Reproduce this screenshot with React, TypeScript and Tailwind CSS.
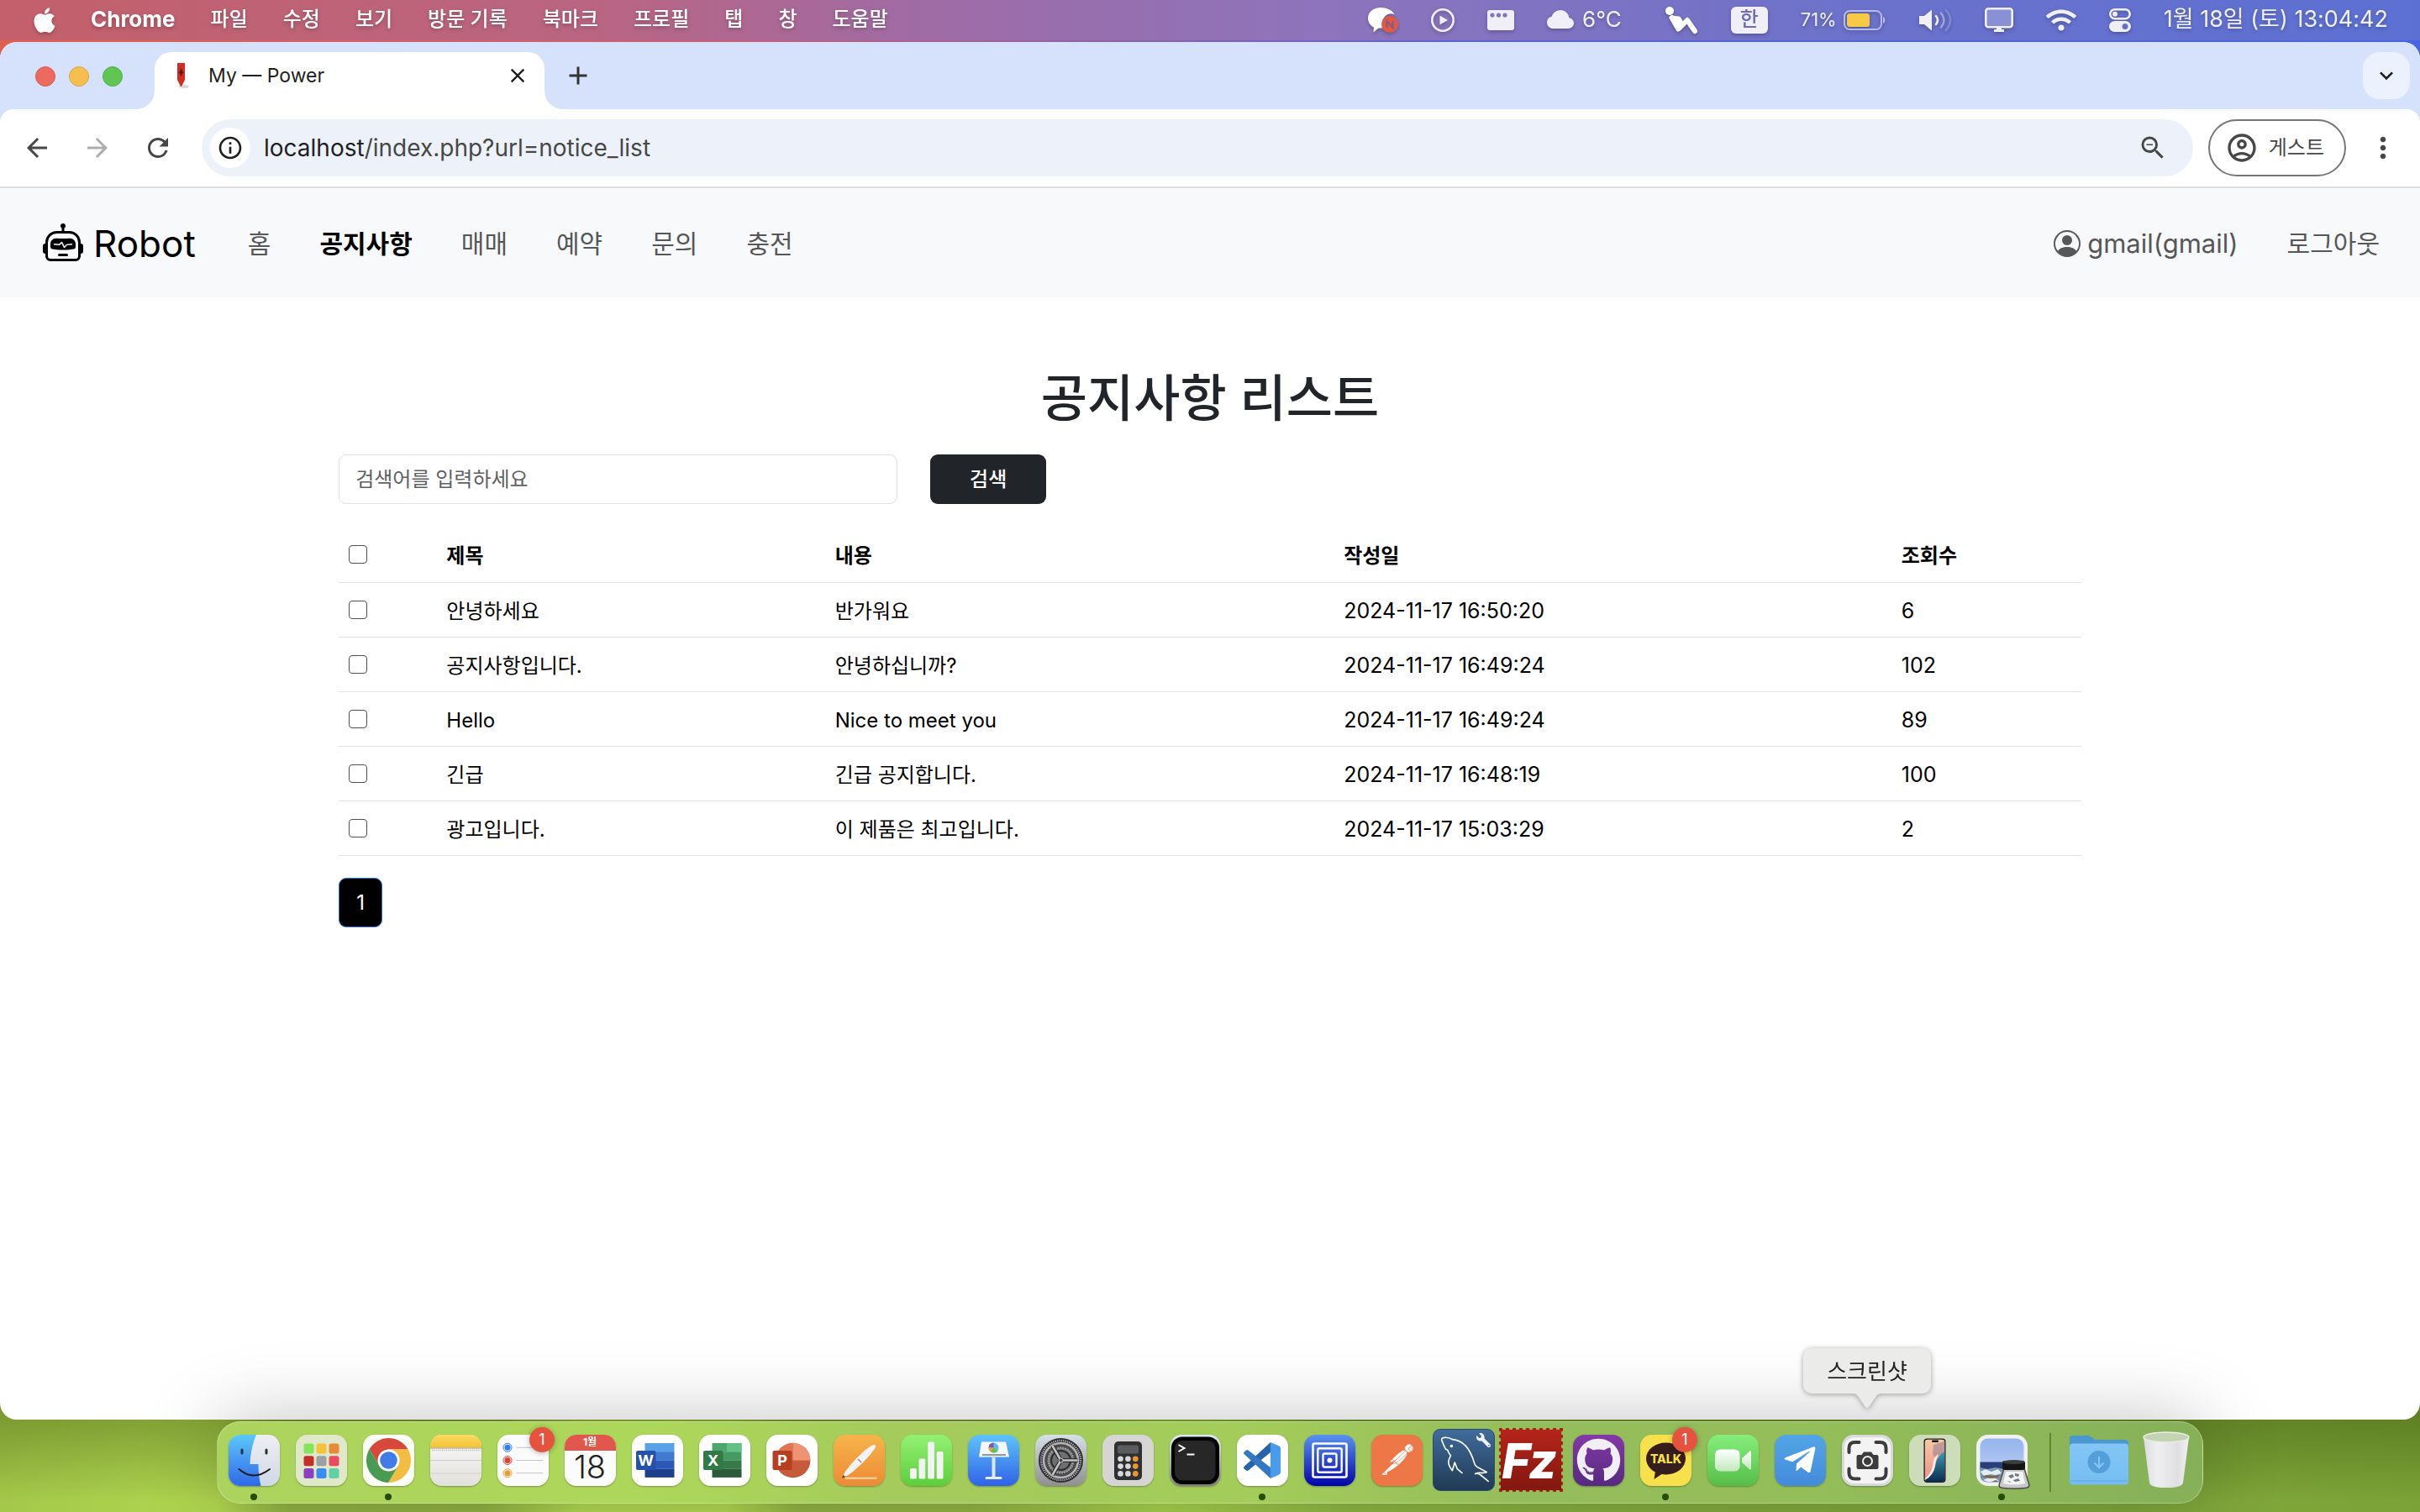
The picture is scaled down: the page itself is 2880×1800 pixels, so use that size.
import type { ReactNode } from "react";
import { FaApple, FaGithub, FaWifi, FaTelegramPlane, FaWrench } from "react-icons/fa";
import { BsRobot, BsPersonCircle, BsCloudFill } from "react-icons/bs";
import { SiPostman } from "react-icons/si";
import {
  MdArrowBack,
  MdArrowForward,
  MdRefresh,
  MdInfoOutline,
  MdZoomOut,
  MdOutlineAccountCircle,
  MdMoreVert,
  MdClose,
  MdAdd,
  MdKeyboardArrowDown,
} from "react-icons/md";

/* ---------- menu bar ---------- */

const menus = ["파일", "수정", "보기", "방문 기록", "북마크", "프로필", "탭", "창", "도움말"];

function MenuBar() {
  return (
    <header className="flex h-12 shrink-0 items-center justify-between bg-[linear-gradient(90deg,#c4606b_0%,#b96582_25%,#9f6ba5_38%,#8d74bc_55%,#6b72cb_77%,#5c70d3_100%)] pr-[38px] pl-9 text-2xl text-white">
      <nav className="flex items-center gap-[42px] pb-0.5 font-medium drop-shadow-[0_2px_2px_rgba(0,0,0,0.25)]" aria-label="메뉴 막대">
        <button type="button" aria-label="Apple" className="-mr-1 pt-0.5">
          <FaApple className="size-[34px]" />
        </button>
        <button type="button" className="text-[26px] font-bold">
          Chrome
        </button>
        {menus.map((m) => (
          <button type="button" key={m}>
            {m}
          </button>
        ))}
      </nav>
      <div className="flex items-center gap-[39px] text-[#f0eff8] drop-shadow-[0_2px_2px_rgba(0,0,0,0.25)]">
        <svg viewBox="0 0 36 32" className="h-8 w-9" aria-hidden="true">
          <path d="M15 1C7 1 0 6 0 13.500c0 5 3 9 7 11l-.5 6 6-5c2 0 4 0 6-.5a11 11 0 0 1 13-16C29 4 22 1 15 1z" fill="#fff" />
          <circle cx="26" cy="21" r="10" fill="#df5a40" />
          <path d="M22.500 25v-8l7 8v-8" stroke="#8a5a80" strokeWidth="2.200" fill="none" />
        </svg>
        <svg viewBox="0 0 28 28" className="size-7" aria-hidden="true">
          <circle cx="14" cy="14" r="12.700" fill="none" stroke="currentColor" strokeWidth="2.600" />
          <path d="M10.500 8.500l9.500 5.500-9.500 5.500z" fill="currentColor" />
        </svg>
        <svg viewBox="0 0 32 24" className="h-6 w-8" aria-hidden="true">
          <rect width="32" height="24" rx="3" fill="currentColor" />
          <circle cx="6" cy="6" r="2.600" fill="#7f74c0" />
          <circle cx="13.500" cy="6" r="2.600" fill="#7f74c0" />
          <circle cx="21" cy="6" r="2.600" fill="#7f74c0" />
        </svg>
        <span className="flex items-center gap-2.5 text-[26px]">
          <BsCloudFill className="size-8" />
          <span className="pb-0.5">6°C</span>
        </span>
        <svg viewBox="0 0 40 34" className="ml-3 h-[34px] w-10" aria-hidden="true">
          <circle cx="6" cy="6" r="5" fill="#fff" />
          <path d="M9 14L17 27L27 17L36 30" fill="none" stroke="#fff" strokeWidth="6" strokeLinecap="round" strokeLinejoin="round" />
          <path d="M8 14l9 1 4 7-5 6z" fill="#fff" stroke="#fff" strokeWidth="5" strokeLinejoin="round" />
        </svg>
        <span className="flex h-8 w-11 items-center justify-center rounded-md bg-[#f0eff8] pb-0.5 text-2xl font-medium text-[#6d6cb8]">한</span>
        <span className="flex items-center gap-2 text-[22px]">
          <span>71%</span>
          <svg viewBox="0 0 50 24" className="h-6 w-[50px]" aria-hidden="true">
            <rect x="1" y="1" width="44" height="22" rx="6.500" fill="none" stroke="#b9b9ea" strokeWidth="2" />
            <rect x="4" y="4" width="27" height="16" rx="3.500" fill="#f7ca45" />
            <path d="M47 8v8c3-1 3-7 0-8z" fill="#b9b9ea" />
          </svg>
        </span>
        <svg viewBox="0 0 40 28" className="h-7 w-10" fill="none" strokeLinecap="round" strokeWidth="2.500" aria-hidden="true">
          <path d="M1 9h6l9-7.500v25L7 19H1z" fill="currentColor" />
          <path d="M21 9q4 5 0 10" stroke="#f0eff8" />
          <path d="M27 5.500q7 8.500 0 17" stroke="#9da3e0" />
          <path d="M33 2q10 12 0 24" stroke="#8088d6" />
        </svg>
        <svg viewBox="0 0 34 29" className="h-[29px] w-[34px]" aria-hidden="true">
          <rect x="1.300" y="1.300" width="31.400" height="22" rx="3" fill="#8a90d6" stroke="currentColor" strokeWidth="2.600" />
          <path d="M14 23h6v3h3v3H11v-3h3z" fill="currentColor" />
        </svg>
        <FaWifi className="size-9" />
        <svg viewBox="0 0 26 28" className="h-7 w-[26px]" aria-hidden="true">
          <rect x="1.300" y="1.300" width="23.400" height="11" rx="5.500" fill="none" stroke="currentColor" strokeWidth="2.600" />
          <circle cx="7" cy="6.800" r="3" fill="currentColor" />
          <rect y="15" width="26" height="13" rx="6.500" fill="currentColor" />
          <circle cx="19" cy="21.500" r="3.500" fill="#666fce" />
        </svg>
        <time className="pb-0.5 text-[27px] whitespace-nowrap">1월 18일 (토) 13:04:42</time>
      </div>
    </header>
  );
}

/* ---------- browser chrome ---------- */

function TabStrip() {
  return (
    <div className="flex h-20 items-end bg-[#d6e1fb] pl-[42px]">
      <div className="flex items-center gap-4 self-center pt-0.5">
        <button type="button" aria-label="닫기" className="size-6 rounded-full border border-[#d65a4f] bg-[#ec6a5e]" />
        <button type="button" aria-label="최소화" className="size-6 rounded-full border border-[#d9a441] bg-[#f4bf4f]" />
        <button type="button" aria-label="확대" className="size-6 rounded-full border border-[#52ad46] bg-[#61c554]" />
      </div>
      <svg viewBox="0 0 22 22" className="ml-4 size-[22px]" aria-hidden="true">
        <path d="M22 0v22H0A22 22 0 0 0 22 0z" fill="#fff" />
      </svg>
      <div className="flex h-[68px] w-[464px] items-center rounded-t-[20px] bg-white pb-3 pl-[26px]">
        <svg viewBox="0 0 16 32" className="h-8 w-4" aria-hidden="true">
          <ellipse cx="9" cy="29" rx="6" ry="2" fill="#d8d8d8" />
          <path d="M1 1h9v20l-4 8h-1l-4-8z" fill="#cf2e20" />
          <path d="M5.500 7l1.500 4 2 1-2 1.500-1.500 4-1.500-4-2-1.500 2-1z" fill="#6a1510" />
        </svg>
        <span className="ml-[22px] grow text-[23px] text-[#1f1f1f]">My — Power</span>
        <button type="button" aria-label="탭 닫기" className="mr-[18px] text-[#1f1f1f]">
          <MdClose className="size-7" />
        </button>
      </div>
      <svg viewBox="0 0 22 22" className="size-[22px]" aria-hidden="true">
        <path d="M0 0v22h22A22 22 0 0 1 0 0z" fill="#fff" />
      </svg>
      <button type="button" aria-label="새 탭" className="self-center text-[#333]">
        <MdAdd className="size-9" />
      </button>
      <button
        type="button"
        aria-label="탭 검색"
        className="mr-3 ml-auto flex size-14 items-center justify-center self-center rounded-[20px] bg-[#ebf2fd] text-[#1f1f1f]"
      >
        <MdKeyboardArrowDown className="size-8" />
      </button>
    </div>
  );
}

function Toolbar() {
  return (
    <div className="bg-[#d6e1fb]">
      <div className="flex h-[94px] items-center rounded-t-2xl border-b-2 border-[#dfdfdf] bg-white pr-6 pl-[26px] text-[#474747]">
        <button type="button" aria-label="뒤로">
          <MdArrowBack className="size-9" />
        </button>
        <button type="button" aria-label="앞으로" className="ml-9 text-[#adadad]">
          <MdArrowForward className="size-9" />
        </button>
        <button type="button" aria-label="새로고침" className="ml-9">
          <MdRefresh className="size-9" />
        </button>
        <div className="ml-[34px] flex h-[68px] grow items-center rounded-full bg-[#edf2fa] pr-[30px] pl-2.5">
          <button type="button" aria-label="사이트 정보" className="flex size-12 items-center justify-center rounded-full bg-white text-[#1f1f1f]">
            <MdInfoOutline className="size-8" />
          </button>
          <a href="#url" className="ml-4 grow text-[28px] text-[#1f1f1f]">
            localhost<span className="text-[#474747]">/index.php?url=notice_list</span>
          </a>
          <button type="button" aria-label="축소">
            <MdZoomOut className="size-9" />
          </button>
        </div>
        <button type="button" className="ml-[18px] flex h-[68px] items-center gap-3 rounded-full border-2 border-[#747775] pr-6 pl-[18px] text-2xl">
          <MdOutlineAccountCircle className="size-10" />
          게스트
        </button>
        <button type="button" aria-label="더보기" className="ml-6">
          <MdMoreVert className="size-10" />
        </button>
      </div>
    </div>
  );
}

/* ---------- web page ---------- */

const links = ["홈", "공지사항", "매매", "예약", "문의", "충전"];

function SiteNav() {
  return (
    <nav className="flex h-[130px] items-center justify-between bg-[#f8f9fb] px-12 pt-0.5 text-[30px] text-[#565758]" aria-label="사이트">
      <div className="flex items-center gap-[58px]">
        <a href="#home" className="mr-1 flex items-center gap-3 pl-[3px] text-[44px] text-black">
          <BsRobot className="size-12" />
          Robot
        </a>
        {links.map((l) => (
          <a key={l} href={"#" + l} className={l === "공지사항" ? "font-bold text-black" : ""}>
            {l}
          </a>
        ))}
      </div>
      <div className="flex items-center gap-[58px]">
        <a href="#profile" className="flex items-center gap-2">
          <BsPersonCircle className="size-8" />
          <span className="text-[31px]">gmail(gmail)</span>
        </a>
        <a href="#logout">로그아웃</a>
      </div>
    </nav>
  );
}

const rows = [
  ["안녕하세요", "반가워요", "2024-11-17 16:50:20", "6"],
  ["공지사항입니다.", "안녕하십니까?", "2024-11-17 16:49:24", "102"],
  ["Hello", "Nice to meet you", "2024-11-17 16:49:24", "89"],
  ["긴급", "긴급 공지합니다.", "2024-11-17 16:48:19", "100"],
  ["광고입니다.", "이 제품은 최고입니다.", "2024-11-17 15:03:29", "2"],
];

function Check({ label }: { label: string }) {
  return (
    <input
      type="checkbox"
      aria-label={label}
      className="block size-[22px] appearance-none rounded-[4px] border border-[#4f4f4f] bg-white"
    />
  );
}

function NoticeList() {
  return (
    <main className="mx-auto w-[72%] grow pt-20 text-2xl text-black">
      <h1 className="text-center text-[60px]/[80px] font-medium text-[#212529]">공지사항 리스트</h1>
      <form className="mt-[27px] flex gap-[39px]" onSubmit={(e) => e.preventDefault()}>
        <input
          type="text"
          aria-label="검색어"
          placeholder="검색어를 입력하세요"
          className="h-[59px] w-[665px] rounded-[9px] border border-[#dee2e6] px-[19px] placeholder:text-[#5e6164]"
        />
        <button type="submit" className="h-[59px] w-[138px] rounded-[9px] bg-[#212529] font-medium text-white">
          검색
        </button>
      </form>
      <table className="mt-7 w-full table-fixed text-left">
        <colgroup>
          <col className="w-[5.6%]" />
          <col className="w-[22.3%]" />
          <col className="w-[29.2%]" />
          <col className="w-[32%]" />
          <col />
        </colgroup>
        <thead>
          <tr className="h-[65px] border-b border-[#dee2e6]">
            <th className="px-3">
              <Check label="전체 선택" />
            </th>
            {["제목", "내용", "작성일", "조회수"].map((h) => (
              <th key={h} className="px-3 pt-1 font-bold">
                {h}
              </th>
            ))}
          </tr>
        </thead>
        <tbody>
          {rows.map((r) => (
            <tr key={r[0]} className="h-[65px] border-b border-[#dee2e6]">
              <td className="px-3">
                <Check label={r[0]} />
              </td>
              {r.map((c, i) => (
                <td key={i} className={i > 1 ? "px-3 pt-1 text-[25px]" : "px-3 pt-1"}>
                  {c}
                </td>
              ))}
            </tr>
          ))}
        </tbody>
      </table>
      <nav className="mt-[26px]" aria-label="페이지">
        <a href="#1" className="flex h-[59px] w-[52px] items-center justify-center rounded-[9px] border border-[#2f6fe8] bg-black pt-0.5 text-white">
          1
        </a>
      </nav>
    </main>
  );
}

/* ---------- dock ---------- */

function Icon({ children }: { children: ReactNode }) {
  return (
    <svg viewBox="0 0 61 61" className="size-[61px] rounded-[14px] shadow-[0_1px_2px_rgba(0,0,0,0.3)]" aria-hidden="true">
      {children}
    </svg>
  );
}

function Grad({ id, from, to }: { id: string; from: string; to: string }) {
  return (
    <linearGradient id={id} x1="0" y1="0" x2="0" y2="1">
      <stop stopColor={from} />
      <stop offset="1" stopColor={to} />
    </linearGradient>
  );
}

const Finder = () => (
  <Icon>
    <Grad id="fa" from="#5cc8f8" to="#2f68ea" />
    <Grad id="fb" from="#efeff2" to="#cfd8e8" />
    <rect width="61" height="61" fill="url(#fb)" />
    <path d="M0 0h33c-5 12-7 24-7.500 35h10c0 9 1 18 3 26H0z" fill="url(#fa)" />
    <path d="M16 18v4M45 18v4" stroke="#263238" strokeWidth="3" strokeLinecap="round" />
    <path d="M12.500 41q17 15 36.500 0" fill="none" stroke="#1c1c1e" strokeWidth="2" strokeLinecap="round" />
  </Icon>
);

const pads = ["#84e45c", "#f5c23e", "#e78b36", "#c62f27", "#9aa0a6", "#ea4b61", "#8a40c0", "#3a8df0", "#63cfa4"];
const Launchpad = () => (
  <Icon>
    <rect width="61" height="61" fill="#dfe9ca" />
    {pads.map((c, i) => (
      <rect key={c} x={9.5 + (i % 3) * 15} y={10.5 + Math.floor(i / 3) * 14.8} width="12" height="12" rx="2.500" fill={c} />
    ))}
  </Icon>
);

const Chrome = () => (
  <Icon>
    <rect width="61" height="61" fill="#fbfdf7" />
    <path d="M30.500 17.500H53.600A26.500 26.500 0 0 0 7.700 17L19.200 37z" fill="#d8483a" />
    <path d="M30.500 17.500H53.600A26.500 26.500 0 0 1 30.200 57L41.800 37z" fill="#f2bd42" />
    <path d="M41.800 37L30.200 57A26.500 26.500 0 0 1 7.700 17L19.200 37z" fill="#4a9b52" />
    <circle cx="30.500" cy="30.500" r="13" fill="#fff" />
    <circle cx="30.500" cy="30.500" r="10.300" fill="#3f7ce8" />
  </Icon>
);

const Notes = () => (
  <Icon>
    <Grad id="na" from="#fadb62" to="#f3c233" />
    <Grad id="nb" from="#fafafa" to="#e2e0db" />
    <rect width="61" height="61" fill="url(#nb)" />
    <rect width="61" height="15.500" fill="url(#na)" />
    <path d="M0 16h61" stroke="#a09a86" />
    <path d="M2 18.500h58" stroke="#b8b8b8" strokeWidth="1.500" strokeDasharray="1.200 1.200" />
    <path d="M0 30.500h61M0 46h61" stroke="#cfcecb" />
  </Icon>
);

const Reminders = () => (
  <Icon>
    <rect width="61" height="61" fill="#fbfbfb" />
    {["#2f7cf6", "#e0402f", "#ee9a30"].map((c, i) => (
      <g key={c}>
        <circle cx="12" cy={15.3 + i * 15.2} r="5" fill="none" stroke={c} strokeWidth="1" />
        <circle cx="12" cy={15.3 + i * 15.2} r="3.500" fill={c} />
        <path d={`M22.500 ${15.3 + i * 15.2}h31.500`} stroke="#c4c4c6" />
      </g>
    ))}
  </Icon>
);

const Calendar = () => (
  <div className="flex size-[61px] flex-col items-center overflow-hidden rounded-[14px] bg-[#fbfbfb] shadow-[0_1px_2px_rgba(0,0,0,0.3)]">
    <div className="flex h-[19px] w-full items-center justify-center bg-[#e2574c] text-xs font-bold text-white">1월</div>
    <div className="text-[38px]/[38px] font-light text-[#222]">18</div>
  </div>
);

function Office({ letter, tile, bands }: { letter: string; tile: string; bands: string[] }) {
  return (
    <Icon>
      <rect width="61" height="61" fill="#fff" />
      {bands.map((c, i) => (
        <rect key={c} x="15.500" y={10 + i * 10.2} width="35" height="10.300" fill={c} />
      ))}
      {letter === "X" && <path d="M33 10h17.500v10.200H33z" fill="#63c186" />}
      <rect x="5" y="19" width="23.500" height="23" rx="2" fill={tile} />
      <text x="16.700" y="37" textAnchor="middle" fontSize="18" fontWeight="700" fill="#fff">
        {letter}
      </text>
    </Icon>
  );
}

const PowerPoint = () => (
  <Icon>
    <rect width="61" height="61" fill="#fff" />
    <circle cx="31.700" cy="30.500" r="20.700" fill="#c65a3b" />
    <path d="M31.700 9.800A20.700 20.700 0 0 0 11 30.500h20.700z" fill="#df7553" />
    <path d="M31.700 9.800A20.700 20.700 0 0 1 52.400 30.500H31.700z" fill="#f09274" />
    <rect x="7.500" y="19" width="23" height="23" rx="2" fill="#b83e20" />
    <text x="19" y="37" textAnchor="middle" fontSize="18" fontWeight="700" fill="#fff">
      P
    </text>
  </Icon>
);

const Pages = () => (
  <Icon>
    <Grad id="pa" from="#f5b54a" to="#ee8a36" />
    <rect width="61" height="61" fill="url(#pa)" />
    <path d="M14 51.700h37.500" stroke="#fbd9a8" strokeWidth="2" />
    <path d="M11.500 49.500q.5-3 3-6.500C22 33 36 18 46 12.500c3-1.500 5 0 3.500 3C44 25 29 40 17.500 48q-2 1.500-6 1.500z" fill="#f3f3f3" />
    <path d="M29 29l4 4" stroke="#8a8a8a" strokeWidth="1.500" />
    <path d="M10 52l1.500-4 2.500 2z" fill="#444" />
  </Icon>
);

const Numbers = () => (
  <Icon>
    <Grad id="nu" from="#93f073" to="#5dce3c" />
    <rect width="61" height="61" fill="url(#nu)" />
    {[
      [11, 40],
      [21.5, 28.5],
      [32.2, 8.5],
      [42.7, 20],
    ].map(([x, y]) => (
      <rect key={x} x={x} y={y} width="7.800" height={52.5 - y} rx="1.500" fill="#f1f4f1" />
    ))}
  </Icon>
);

const Keynote = () => (
  <Icon>
    <Grad id="ka" from="#5fc3fa" to="#2f62e8" />
    <rect width="61" height="61" fill="url(#ka)" />
    <path d="M16 8.500h29l4 18H13z" fill="#f3f6fa" />
    <path d="M17 24h28" stroke="#8d99a8" strokeWidth="2" />
    <circle cx="30.500" cy="15.500" r="6" fill="#5bc0e8" />
    <path d="M30.500 15.500v-6a6 6 0 0 0-6 6z" fill="#8b4fb0" />
    <path d="M30.500 15.500h-6a6 6 0 0 0 3 5z" fill="#f0a030" />
    <path d="M30.500 15.500l-3 5a6 6 0 0 0 8-1z" fill="#6cc04a" />
    <path d="M30.500 27v24" stroke="#dfe6ee" strokeWidth="4" />
    <path d="M22 51.500h17" stroke="#e8edf3" strokeWidth="3" strokeLinecap="round" />
  </Icon>
);

const Settings = () => (
  <Icon>
    <Grad id="sa" from="#d5e0e8" to="#8f8f8f" />
    <rect width="61" height="61" fill="url(#sa)" />
    <circle cx="30.500" cy="30.500" r="26.500" fill="#2c2c2e" />
    <circle cx="30.500" cy="30.500" r="23.500" fill="none" stroke="#b5b5b7" strokeWidth="2.500" strokeDasharray="1.200 1.200" />
    <circle cx="30.500" cy="30.500" r="20.500" fill="#4a4a4c" stroke="#b5b5b7" strokeWidth="2.500" />
    <circle cx="30.500" cy="30.500" r="15" fill="#77787a" stroke="#a0a0a2" strokeWidth="2" strokeDasharray="2 1" />
    <circle cx="30.500" cy="30.500" r="11.500" fill="#6e6f71" stroke="#2c2c2e" strokeWidth="2" />
    <path d="M30.500 30.500h20M30.500 30.500l-10-17.300M30.500 30.500l-10 17.300" stroke="#2c2c2e" strokeWidth="5" />
    <path d="M30.500 30.500h20M30.500 30.500l-10-17.300M30.500 30.500l-10 17.300" stroke="#c4c4c6" strokeWidth="2.600" />
    <circle cx="30.500" cy="30.500" r="2.500" fill="#444" stroke="#d0d0d2" />
  </Icon>
);

const Calculator = () => (
  <Icon>
    <rect width="61" height="61" fill="#d6d5d3" />
    <rect x="14" y="8" width="33" height="46" rx="5" fill="#2f3032" />
    <rect x="18" y="12.500" width="25" height="10" rx="2" fill="#5b5c5f" />
    {[0, 1, 2].map((r) =>
      [0, 1, 2].map((c) => (
        <circle key={`${r}${c}`} cx={21.5 + c * 8.9} cy={28.8 + r * 8.8} r="3.300" fill={c === 2 ? "#ef9530" : "#d9d9d9"} />
      )),
    )}
  </Icon>
);

const Terminal = () => (
  <Icon>
    <Grad id="ta" from="#dceaf2" to="#7d7d7d" />
    <rect width="61" height="61" fill="url(#ta)" />
    <rect x="2" y="2.500" width="57" height="56.500" rx="13" fill="#000" />
    <rect x="6" y="7" width="48.500" height="47.500" rx="9" fill="#272727" />
    <path d="M10.500 12l7 4-7 4" fill="none" stroke="#fff" strokeWidth="2" />
    <path d="M20.500 23.500h9" stroke="#fff" strokeWidth="2" />
  </Icon>
);

const VSCode = () => (
  <Icon>
    <rect width="61" height="61" fill="#fff" />
    <path d="M40 9L8.500 38q-1 1 0 2.200l2.500 2.300q1.200.8 2.500 0L40 21z" fill="#2763a8" />
    <path d="M40 52L8.500 23q-1-1 0-2.200l2.500-2.300q1.200-.8 2.500 0L40 39z" fill="#3277c4" />
    <path d="M40 9l10 4.300q2 1 2 3v28.400q0 2-2 3L40 52z" fill="#4a9be8" />
  </Icon>
);

const Squares = () => (
  <Icon>
    <Grad id="ua" from="#5a93f0" to="#0303a8" />
    <rect width="61" height="61" fill="url(#ua)" />
    <g fill="none" stroke="#fff" strokeWidth="2.400">
      <rect x="10.500" y="10.500" width="40" height="40" rx="2" strokeWidth="2.600" />
      <rect x="16.300" y="16.300" width="28.400" height="28.400" rx="2" />
      <rect x="22.500" y="22.500" width="16" height="16" rx="2" />
    </g>
    <circle cx="30.500" cy="30.500" r="3" fill="#fff" />
  </Icon>
);

const Postman = () => (
  <div className="flex size-[61px] items-center justify-center overflow-hidden rounded-[14px] bg-[#ee7748] shadow-[0_1px_2px_rgba(0,0,0,0.3)]">
    <div className="rounded-full bg-white bg-clip-content p-0.5">
      <SiPostman className="-m-0.5 size-[61px] text-[#ee7748]" />
    </div>
  </div>
);

const Workbench = () => (
  <div className="relative size-[74px] rounded-[9px] border border-[#2a4c74] bg-linear-to-b from-[#416c9c] to-[#213a55]">
    <svg viewBox="0 0 74 74" className="size-full" fill="none" stroke="#fff" strokeWidth="1.700" strokeLinecap="round" strokeLinejoin="round" aria-hidden="true">
      <path d="M67 63L57 55q-3-2-6-1 4-2 8-1l6-1-9-5q-5-2-6-6C46 27 38 13 23 12c-4-3-14-4-13 1 2 4 3 8 5 11 2 1 3 0 3 3l3 5c-5 8-2 13 2 18l3-10 3 8 6 5" />
      <circle cx="22" cy="20" r="1" />
    </svg>
    <FaWrench className="absolute top-1 right-1 size-[17px] -scale-x-100 text-[#eef4fa]" />
  </div>
);

const FileZilla = () => (
  <svg viewBox="0 0 76 76" className="size-[76px]" aria-hidden="true">
    <Grad id="za" from="#b5241a" to="#821810" />
    <rect x="2" y="2" width="72" height="72" fill="none" stroke="#a01f15" strokeWidth="4.500" strokeLinecap="round" strokeDasharray="0 8" />
    <rect x="2" y="2" width="72" height="72" fill="url(#za)" />
    <text x="36" y="60" textAnchor="middle" fontFamily="Inter" fontStyle="italic" fontWeight="800" fontSize="58" fill="#fff">
      Fz
    </text>
  </svg>
);

const GitHub = () => (
  <div className="flex size-[61px] items-center justify-center rounded-[14px] bg-linear-to-b from-[#8538a8] to-[#552a80] shadow-[0_1px_2px_rgba(0,0,0,0.3)]">
    <FaGithub className="size-[53px] text-[#f1eff5]" />
  </div>
);

const Talk = () => (
  <Icon>
    <rect width="61" height="61" fill="#f7e04b" />
    <ellipse cx="30.500" cy="28.500" rx="23.500" ry="19" fill="#351e1c" />
    <path d="M18 43l-1.500 10 12-8z" fill="#351e1c" />
    <text x="30.500" y="34" textAnchor="middle" fontSize="14" fontWeight="800" fill="#f7e04b">
      TALK
    </text>
  </Icon>
);

const FaceTime = () => (
  <Icon>
    <Grad id="ga" from="#86ef7c" to="#55bd48" />
    <Grad id="gb" from="#ffffff" to="#c2e8bd" />
    <rect width="61" height="61" fill="url(#ga)" />
    <rect x="9" y="17.500" width="29.500" height="26" rx="6" fill="url(#gb)" />
    <path d="M41 28l9-8q2-1.500 2 .5v20q0 2-2 .5l-9-8z" fill="url(#gb)" />
  </Icon>
);

const Telegram = () => (
  <div className="flex size-[61px] items-center justify-center rounded-[14px] bg-linear-to-b from-[#53a5e6] to-[#448bdb] shadow-[0_1px_2px_rgba(0,0,0,0.3)]">
    <FaTelegramPlane className="size-[42px] text-white" />
  </div>
);

const Screenshot = () => (
  <Icon>
    <rect width="61" height="61" fill="#d9d9d9" />
    <rect x="3" y="3" width="55" height="55" rx="12" fill="#f3f3f3" />
    <path
      d="M8.500 21v-5q0-7 7-7h5M40.500 9h5q7 0 7 7v5M52.500 40.500v5q0 7-7 7h-5M20.500 52.500h-5q-7 0-7-7v-5"
      fill="none"
      stroke="#3c3c3c"
      strokeWidth="4"
      strokeLinecap="round"
    />
    <path d="M17.500 26q0-2 2-2h4l2.500-3.500h9L37.500 24h4q2 0 2 2v13q0 2-2 2h-22q-2 0-2-2z" fill="#3c3c3c" />
    <circle cx="30.500" cy="31.500" r="5.500" fill="#3c3c3c" stroke="#f3f3f3" strokeWidth="2" />
  </Icon>
);

const Phone = () => (
  <Icon>
    <Grad id="ha" from="#f6c9a0" to="#ee8d92" />
    <Grad id="hb" from="#3b9bb8" to="#0d2b4d" />
    <rect width="61" height="61" fill="#cddcb9" />
    <rect x="17.500" y="4.500" width="26" height="52.500" rx="4" fill="#1c1c1e" />
    <rect x="18.800" y="5.800" width="23.400" height="50" rx="3" fill="url(#ha)" />
    <path d="M42.200 8v14C32 25 26 34 29 12z" fill="#a58a94" opacity=".7" />
    <path d="M42.200 20v33q0 3-3 3H21.800q-3 0-3-3 12-6 13-20 3-9 10.400-13z" fill="url(#hb)" />
    <path d="M18.800 52q9-6 10-20 2-7 6-9-3 6-4 14-2 12-12 17z" fill="#fbeee8" />
    <rect x="27" y="6.500" width="8" height="2.500" rx="1.200" fill="#111" />
  </Icon>
);

const Preview = () => (
  <svg viewBox="0 0 65 65" className="-mr-1 -mb-1 size-[65px]" aria-hidden="true">
    <Grad id="va" from="#93b4ee" to="#c3d3f2" />
    <rect width="61" height="61" rx="14" fill="#f1f1f0" />
    <rect x="4.500" y="4.500" width="52" height="52" rx="9" fill="url(#va)" />
    <path d="M4.500 32.500h52v10h-52z" fill="#2a3f78" />
    <path d="M4.500 39l8 2 10-2 12 2v15.500H13q-8.500 0-8.500-8.500z" fill="#7c97b4" />
    <path d="M5 44l6-3 7 3 8-3 4 5-7 2-6-1-8 2zM8 54l7-3 8 1 5 4H13z" fill="#e6edf2" />
    <path d="M6 50l6-2 8 1 8-1-2 3-10 1zM18 56l5-2 4 2z" fill="#7b6654" />
    <path d="M33 40h24l6 20q0 3-5 3.500-13 1.500-26 0-5-.5-5-3.500z" fill="#c9c9c9" stroke="#4b4b4b" strokeWidth="1.500" />
    <path d="M35 44h20l3 14q-13 3-26 0z" fill="#f4f5f6" />
    <path d="M38 49l5-2 2 3-4 2zM46 46l5 1-1 3-4-1zM44 54l6-2 2 3-6 1zM37 55l4 1-1 1z" fill="#6f7780" />
    <rect x="31" y="31" width="27" height="11" rx="3" fill="#151515" />
    <ellipse cx="44.500" cy="32.500" rx="13" ry="2.500" fill="#3d3d3d" />
  </svg>
);

const Folder = () => (
  <svg viewBox="0 0 70 60" className="h-[60px] w-[70px]" aria-hidden="true">
    <Grad id="da" from="#84c6f5" to="#74bdf2" />
    <path d="M0 5q0-4 4-4h18q2 0 4 2l3 2q1 1 3 1h34q4 0 4 4v10H0z" fill="#4a98d0" />
    <rect y="10.500" width="70" height="49" rx="4" fill="url(#da)" />
    <path d="M1 55h68" stroke="#62a9dd" />
    <circle cx="35" cy="32.500" r="13.500" fill="#559fd9" />
    <path d="M35 26v12M29.500 33.500l5.500 5.500 5.500-5.500" fill="none" stroke="#84c6f5" strokeWidth="2" />
  </svg>
);

const Trash = () => (
  <svg viewBox="0 0 56 68" className="h-[68px] w-14" aria-hidden="true">
    <linearGradient id="wa">
      <stop stopColor="#dcdcdf" />
      <stop offset=".3" stopColor="#efeff1" />
      <stop offset=".75" stopColor="#dfdfe2" />
      <stop offset="1" stopColor="#f2f2f3" />
    </linearGradient>
    <path d="M1 7l7 54q1 6 20 6t20-6l7-54z" fill="url(#wa)" />
    <ellipse cx="28" cy="7" rx="27" ry="6" fill="#c5d3b5" stroke="#e9efe2" strokeWidth="1.500" />
  </svg>
);

const wordBands = ["#58a0e8", "#4079d0", "#2c58b8", "#1e3f8c"];
const excelBands = ["#4fa56e", "#459a62", "#357a48", "#2b5b3a"];

const apps: { name: string; icon: ReactNode; running?: boolean; badge?: string; tip?: string }[] = [
  { name: "Finder", icon: <Finder />, running: true },
  { name: "Launchpad", icon: <Launchpad /> },
  { name: "Chrome", icon: <Chrome />, running: true },
  { name: "메모", icon: <Notes /> },
  { name: "미리 알림", icon: <Reminders />, badge: "1" },
  { name: "캘린더", icon: <Calendar /> },
  { name: "Word", icon: <Office letter="W" tile="#2450b0" bands={wordBands} /> },
  { name: "Excel", icon: <Office letter="X" tile="#2f7a45" bands={excelBands} /> },
  { name: "PowerPoint", icon: <PowerPoint /> },
  { name: "Pages", icon: <Pages /> },
  { name: "Numbers", icon: <Numbers /> },
  { name: "Keynote", icon: <Keynote /> },
  { name: "시스템 설정", icon: <Settings /> },
  { name: "계산기", icon: <Calculator /> },
  { name: "터미널", icon: <Terminal /> },
  { name: "Visual Studio Code", icon: <VSCode />, running: true },
  { name: "가상 화면", icon: <Squares /> },
  { name: "Postman", icon: <Postman /> },
  { name: "MySQL Workbench", icon: <Workbench /> },
  { name: "FileZilla", icon: <FileZilla /> },
  { name: "GitHub Desktop", icon: <GitHub /> },
  { name: "카카오톡", icon: <Talk />, running: true, badge: "1" },
  { name: "FaceTime", icon: <FaceTime /> },
  { name: "Telegram", icon: <Telegram /> },
  { name: "스크린샷", icon: <Screenshot />, tip: "스크린샷" },
  { name: "iPhone 미러링", icon: <Phone /> },
  { name: "미리보기", icon: <Preview />, running: true },
];

function DockItem({ name, icon, running, badge, tip }: (typeof apps)[number]) {
  return (
    <button type="button" aria-label={name} className="relative flex h-24 w-20 items-center justify-center pb-1.5">
      {icon}
      {running && <span className="absolute bottom-[3px] left-9 size-2 rounded-full bg-[#264d04]" />}
      {badge && (
        <span className="absolute top-1.5 right-0.5 flex size-[30px] items-center justify-center rounded-full bg-[#e5533f] text-lg text-white shadow-[0_1px_6px_rgba(0,0,0,0.3)]">
          {badge}
        </span>
      )}
      {tip && (
        <span className="absolute bottom-[130px] left-1/2 flex h-[54px] w-[152px] -translate-x-1/2 items-center justify-center rounded-[10px] bg-[#ebebea] text-[26px] text-[#222] drop-shadow-[0_1px_3px_rgba(0,0,0,0.35)]">
          {tip}
          <svg viewBox="0 0 32 19" className="absolute top-full left-1/2 h-[19px] w-8 -translate-x-1/2" aria-hidden="true">
            <path d="M0 0q3 0 5 3l9 13q2 2 4 0l9-13q2-3 5-3z" fill="#ebebea" />
          </svg>
        </span>
      )}
    </button>
  );
}

function Dock() {
  return (
    <footer className="relative mx-auto mt-0.5 mb-2.5 flex h-[98px] items-center rounded-[28px] border border-white/30 bg-[linear-gradient(90deg,#acd35d_0%,#add75a_22%,#a4cb5c_34%,#a3cc5a_52%,#95bc5b_66%,#94be59_80%,#86b058_100%)] px-[3px] shadow-[0_0_90px_rgba(0,0,0,0.25)]">
      {apps.map((a) => (
        <DockItem key={a.name} {...a} />
      ))}
      <span className="mx-[17px] h-[70px] w-0.5 bg-[#5c8a2c]" />
      <button type="button" aria-label="다운로드" className="flex w-20 justify-center pb-1.5">
        <Folder />
      </button>
      <button type="button" aria-label="휴지통" className="flex w-20 justify-center pb-1.5">
        <Trash />
      </button>
    </footer>
  );
}

export default function App() {
  return (
    <div className="flex min-h-screen flex-col [background:linear-gradient(180deg,rgba(40,60,0,0.35)_0%,rgba(40,60,0,0.3)_20%,transparent_90%)_bottom/100%_130px_no-repeat,linear-gradient(90deg,#a4c84a_0%,#b0d650_9%,#94b544_12%,#93b444_20%,#b4dc52_24%,#b4dc52_30%,#94b544_33%,#94b544_40%,#aad44e_48%,#90b844_56%,#85ad3e_70%,#82aa3c_86%,#7aa236_100%)_bottom/100%_130px_no-repeat,linear-gradient(90deg,#e0604f_0%,#c8607a_30%,#5b63d0_60%,#4a63e6_100%)] font-['Inter','Noto_Sans_CJK_KR',sans-serif]">
      <MenuBar />
      <div className="mt-0.5 flex grow flex-col overflow-hidden rounded-[20px] bg-white">
        <TabStrip />
        <Toolbar />
        <SiteNav />
        <NoticeList />
      </div>
      <Dock />
    </div>
  );
}
